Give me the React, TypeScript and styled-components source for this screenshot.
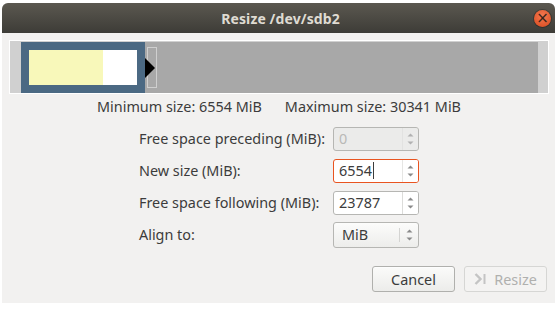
import React from 'react';
import styled, { createGlobalStyle } from 'styled-components';

const GlobalStyle = createGlobalStyle`
  html, body {
    margin: 0;
    padding: 0;
    background: #ffffff;
  }
  body {
    font-family: 'Noto Sans', 'Open Sans', sans-serif;
    font-size: 14.4px;
    color: #3c3c3c;
  }
`;

// 스핀 버튼 위/아래 화살표
const SpinArrows = () => (
  <svg width="7" height="14" viewBox="0 0 7 14">
    <path d="M0.5 4.5 L3.5 1.5 L6.5 4.5 Z" fill="#8a8a8a" />
    <path d="M0.5 9.5 L3.5 12.5 L6.5 9.5 Z" fill="#8a8a8a" />
  </svg>
);

const GoLastIcon = () => (
  <svg width="14" height="14" viewBox="0 0 14 14">
    <path d="M1.5 2 L6.5 7 L1.5 12" fill="none" stroke="#c4c4c4" strokeWidth="2.4" />
    <rect x="9.5" y="2" width="2" height="10" fill="#c4c4c4" />
  </svg>
);

interface SpinFieldProps {
  value: string;
  state?: 'normal' | 'disabled' | 'focused';
}

const SpinField = ({ value, state = 'normal' }: SpinFieldProps) => (
  <SpinBox $state={state}>
    <SpinText $state={state}>
      {value}
      {state === 'focused' && <Caret />}
    </SpinText>
    <SpinButtons $state={state}>
      <SpinArrows />
    </SpinButtons>
  </SpinBox>
);

const rows: { label: string; value: string; state: 'normal' | 'disabled' | 'focused' }[] = [
  { label: 'Free space preceding (MiB):', value: '0', state: 'disabled' },
  { label: 'New size (MiB):', value: '6554', state: 'focused' },
  { label: 'Free space following (MiB):', value: '23787', state: 'normal' },
];

const App = () => {
  return (
    <>
      <GlobalStyle />
      <Window>
        <TitleBar>
          <span />
          <Title>Resize /dev/sdb2</Title>
          <CloseButton>×</CloseButton>
        </TitleBar>

        <Body>
          <PartitionFrame>
            <Track>
              <PartitionBlock>
                <UsedSpace />
                <UnusedSpace />
              </PartitionBlock>
              <ResizeHandle />
              <HandleArrow />
            </Track>
          </PartitionFrame>

          <SizeLimits>
            <span>Minimum size: 6554 MiB</span>
            <span>Maximum size: 30341 MiB</span>
          </SizeLimits>

          <FormGrid>
            {rows.map(row => (
              <React.Fragment key={row.label}>
                <FieldLabel>{row.label}</FieldLabel>
                <SpinField value={row.value} state={row.state} />
              </React.Fragment>
            ))}
            <FieldLabel>Align to:</FieldLabel>
            <ComboBox>
              <ComboText>MiB</ComboText>
              <ComboArrows>
                <SpinArrows />
              </ComboArrows>
            </ComboBox>
          </FormGrid>

          <ButtonRow>
            <DialogButton>Cancel</DialogButton>
            <DialogButton $disabled>
              <GoLastIcon />
              Resize
            </DialogButton>
          </ButtonRow>
        </Body>
      </Window>
    </>
  );
};

const Window = styled.div`
  width: 553px;
  margin: 3px 0 0 2px;
  background: #f2f1f0;
  border-radius: 6px 6px 0 0;
  overflow: hidden;
`;

const TitleBar = styled.div`
  height: 30px;
  display: grid;
  grid-template-columns: 1fr auto 1fr;
  align-items: center;
  background: linear-gradient(to bottom, #5b5850, #3d3c37);
  padding: 0 4px 0 8px;
`;

const Title = styled.div`
  font-weight: bold;
  font-size: 14px;
  color: #dfdbd2;
  letter-spacing: 0.1px;
`;

const CloseButton = styled.div`
  justify-self: end;
  width: 17px;
  height: 17px;
  border-radius: 50%;
  background: radial-gradient(circle at 50% 35%, #f47a52, #d9481c);
  box-shadow: 0 0 0 1px rgba(0, 0, 0, 0.25);
  color: #3a2418;
  font-size: 15px;
  line-height: 17px;
  text-align: center;
  font-family: 'DejaVu Sans', sans-serif;
`;

const Body = styled.div`
  padding: 7px 6px 11px 7px;
  display: flex;
  flex-direction: column;
`;

const PartitionFrame = styled.div`
  height: 51px;
  border: 1px solid #ffffff;
  background: #d0d0d0;
  padding: 1px 10px 0 11px;
  display: flex;
`;

const Track = styled.div`
  flex: 1;
  position: relative;
  display: flex;
  background: #a8a8a8;
`;

const PartitionBlock = styled.div`
  width: 108px;
  padding: 8px;
  display: flex;
  background: #4b6983;
`;

const UsedSpace = styled.div`
  width: 74px;
  background: #f8f8ba;
`;

const UnusedSpace = styled.div`
  flex: 1;
  background: #ffffff;
`;

const ResizeHandle = styled.div`
  position: absolute;
  left: 126px;
  top: 5px;
  width: 8px;
  height: 39px;
  border: 1px solid #cfcfcf;
`;

const HandleArrow = styled.div`
  position: absolute;
  left: 124px;
  top: 16px;
  width: 0;
  height: 0;
  border-top: 10px solid transparent;
  border-bottom: 10px solid transparent;
  border-left: 10px solid #000000;
`;

const SizeLimits = styled.div`
  display: flex;
  justify-content: center;
  gap: 23px;
  margin-top: 3px;
  line-height: 20px;
`;

const FormGrid = styled.div`
  display: grid;
  grid-template-columns: auto 86px;
  grid-auto-rows: 25px;
  column-gap: 8px;
  row-gap: 7px;
  justify-content: center;
  align-items: center;
  margin-top: 9px;
`;

const FieldLabel = styled.div`
  white-space: nowrap;
`;

const SpinBox = styled.div<{ $state: 'normal' | 'disabled' | 'focused' }>`
  height: 24px;
  display: flex;
  box-sizing: border-box;
  border-radius: 3px;
  border: 1px solid ${props => (props.$state === 'focused' ? '#e95420' : '#b6b6b3')};
  background: ${props => (props.$state === 'disabled' ? '#ebebea' : '#ffffff')};
  overflow: hidden;
`;

const SpinText = styled.div<{ $state: 'normal' | 'disabled' | 'focused' }>`
  flex: 1;
  display: flex;
  align-items: center;
  padding-left: 5px;
  color: ${props => (props.$state === 'disabled' ? '#b9b9b7' : '#3c3c3c')};
`;

const Caret = styled.span`
  display: inline-block;
  width: 1px;
  height: 17px;
  background: #3c3c3c;
  margin-left: 1px;
`;

const SpinButtons = styled.div<{ $state: 'normal' | 'disabled' | 'focused' }>`
  width: 15px;
  display: flex;
  align-items: center;
  justify-content: center;
  border-left: 1px solid ${props => (props.$state === 'focused' ? '#e6e6e4' : '#dcdcda')};
  background: ${props => (props.$state === 'disabled' ? '#ebebea' : '#ffffff')};
  opacity: ${props => (props.$state === 'disabled' ? 0.6 : 1)};
`;

const ComboBox = styled.div`
  height: 26px;
  box-sizing: border-box;
  display: flex;
  border: 1px solid #b6b6b3;
  border-radius: 3px;
  background: linear-gradient(to bottom, #fcfcfb, #ededeb);
`;

const ComboText = styled.div`
  flex: 1;
  display: flex;
  align-items: center;
  padding-left: 8px;
`;

const ComboArrows = styled.div`
  width: 18px;
  margin: 5px 0;
  display: flex;
  align-items: center;
  justify-content: center;
  border-left: 1px solid #d4d4d2;
`;

const ButtonRow = styled.div`
  display: flex;
  justify-content: flex-end;
  gap: 9px;
  margin-top: 19px;
  padding-right: 2px;
`;

const DialogButton = styled.div<{ $disabled?: boolean }>`
  width: 83px;
  height: 26px;
  box-sizing: border-box;
  display: flex;
  align-items: center;
  justify-content: center;
  gap: 6px;
  border-radius: 3px;
  border: 1px solid ${props => (props.$disabled ? '#d6d6d4' : '#b0b0ad')};
  background: ${props =>
    props.$disabled ? '#f4f3f2' : 'linear-gradient(to bottom, #fbfbfa, #ececea)'};
  color: ${props => (props.$disabled ? '#b0b0ae' : '#3c3c3c')};
  box-shadow: ${props => (props.$disabled ? 'none' : '0 1px 0 rgba(255,255,255,0.6) inset')};
`;

export default App;
